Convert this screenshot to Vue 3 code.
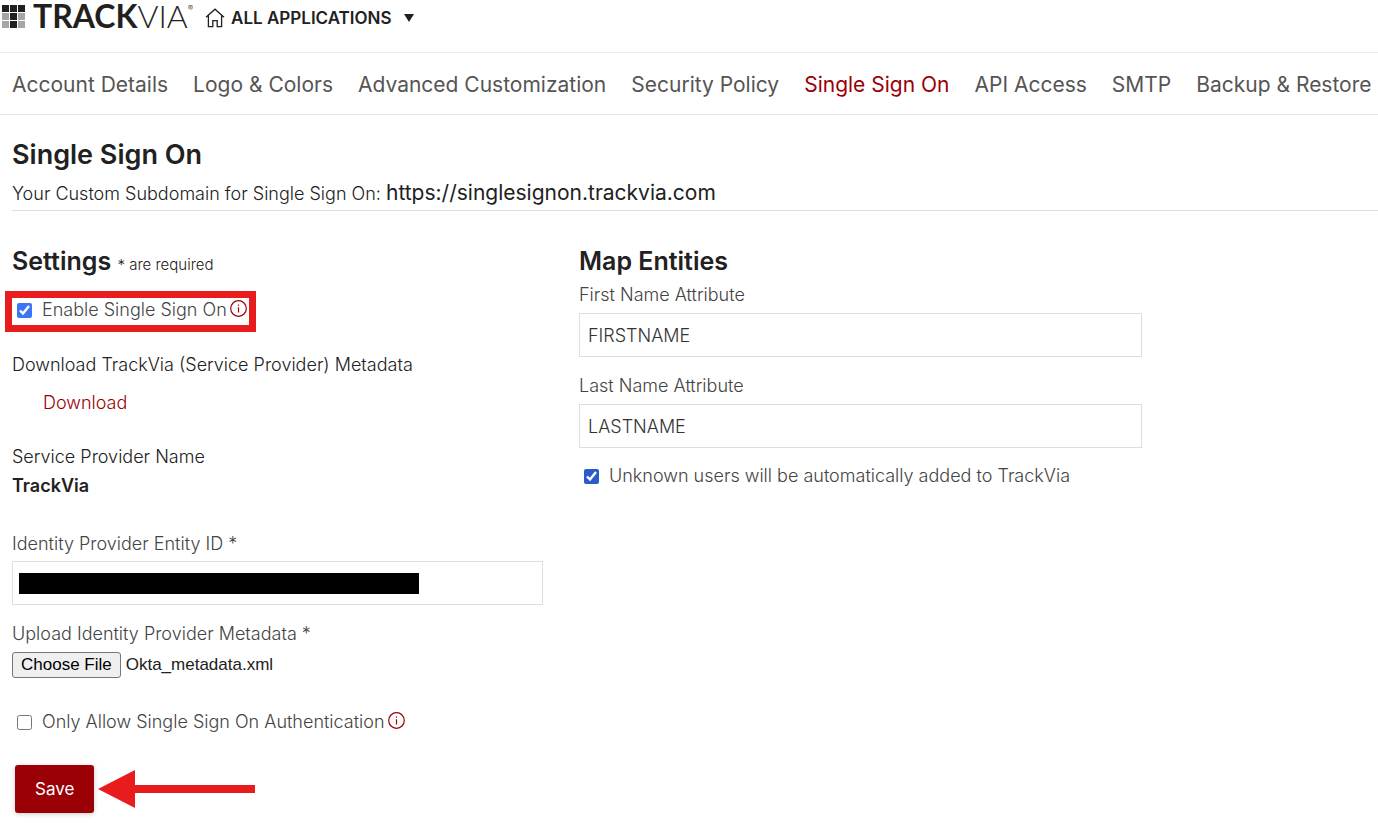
<template>
  <div class="page">
    <header class="topbar">
      <a class="brand" href="#" aria-label="TrackVia home">
        <svg class="brand-mark" viewBox="0 0 23 23" aria-hidden="true">
          <rect
            v-for="cell in markCells"
            :key="cell.id"
            :x="cell.x"
            :y="cell.y"
            width="7"
            height="7"
            :fill="cell.dark ? '#221f20' : '#a7a5a6'"
          />
        </svg>
        <span class="brand-name"><b>TRACK</b><span class="brand-thin">VIA</span></span>
        <sup class="brand-reg">®</sup>
      </a>
      <button class="apps" type="button">
        <svg class="apps-home" viewBox="0 0 20 20" aria-hidden="true">
          <path d="M1 9.2 10 1.2l9 8M3.4 7.4v11.2h4.4v-6h4.4v6h4.4V7.4" />
        </svg>
        <span>ALL APPLICATIONS</span>
        <svg class="apps-caret" viewBox="0 0 10 8" aria-hidden="true"><path d="M0 0h10L5 8z" /></svg>
      </button>
    </header>

    <nav class="tabs">
      <a v-for="tab in tabs" :key="tab" href="#" :class="{ active: tab === activeTab }">{{ tab }}</a>
    </nav>

    <main class="content">
      <section class="intro">
        <h1>Single Sign On</h1>
        <p>Your Custom Subdomain for Single Sign On: <span class="domain">https://singlesignon.trackvia.com</span></p>
      </section>

      <form class="columns" @submit.prevent>
        <section class="column">
          <h2>Settings <small>* are required</small></h2>
          <div class="check-row highlighted">
            <input id="enable-sso" v-model="enabled" type="checkbox" />
            <label for="enable-sso">Enable Single Sign On</label>
            <svg class="info" viewBox="0 0 17 17" aria-hidden="true">
              <circle cx="8.5" cy="8.5" r="7.8" />
              <path d="M8.5 7.2v5.3M8.5 4.4v1.4" />
            </svg>
          </div>

          <p class="metadata">Download TrackVia (Service Provider) Metadata</p>
          <a class="download" href="#">Download</a>

          <p class="provider">Service Provider Name</p>
          <p class="provider-name">TrackVia</p>

          <label class="entity-label" for="entity-id">Identity Provider Entity ID *</label>
          <div class="redacted">
            <input id="entity-id" class="text-input" type="text" />
          </div>

          <label class="upload-label" for="idp-file">Upload Identity Provider Metadata *</label>
          <input id="idp-file" ref="fileInput" class="file-input" type="file" />

          <div class="check-row only-row">
            <input id="only-sso" v-model="onlySso" type="checkbox" />
            <label for="only-sso">Only Allow Single Sign On Authentication</label>
            <svg class="info" viewBox="0 0 17 17" aria-hidden="true">
              <circle cx="8.5" cy="8.5" r="7.8" />
              <path d="M8.5 7.2v5.3M8.5 4.4v1.4" />
            </svg>
          </div>

          <div class="actions">
            <button class="save" type="submit">Save</button>
            <svg class="arrow" viewBox="0 0 157 38" aria-hidden="true">
              <path d="M0 19 37 0v15h120v8H37v15z" />
            </svg>
          </div>
        </section>

        <section class="column">
          <h2>Map Entities</h2>
          <label class="first-label" for="first-name">First Name Attribute</label>
          <input id="first-name" v-model="firstName" class="text-input" type="text" />
          <label class="last-label" for="last-name">Last Name Attribute</label>
          <input id="last-name" v-model="lastName" class="text-input" type="text" />
          <div class="check-row unknown-row">
            <input id="unknown-users" v-model="addUnknown" type="checkbox" />
            <label for="unknown-users">Unknown users will be automatically added to TrackVia</label>
          </div>
        </section>
      </form>
    </main>
  </div>
</template>

<script setup>
import { onMounted, ref } from 'vue'

const tabs = [
  'Account Details',
  'Logo & Colors',
  'Advanced Customization',
  'Security Policy',
  'Single Sign On',
  'API Access',
  'SMTP',
  'Backup & Restore'
]
const activeTab = ref('Single Sign On')

// the dark cells of the mark form a "T"
const markCells = Array.from({ length: 9 }, (_, i) => ({
  id: i,
  x: (i % 3) * 8,
  y: Math.floor(i / 3) * 8,
  dark: i < 3 || i % 3 === 1
}))

const enabled = ref(true)
const onlySso = ref(false)
const addUnknown = ref(true)
const firstName = ref('FIRSTNAME')
const lastName = ref('LASTNAME')

const fileInput = ref(null)

onMounted(() => {
  // file inputs have no settable value, so the stored file goes in through a DataTransfer
  const transfer = new DataTransfer()
  transfer.items.add(new File([''], 'Okta_metadata.xml', { type: 'text/xml' }))
  fileInput.value.files = transfer.files
})
</script>

<style>
body {
  margin: 0;
  background: #fff;
}
</style>

<style scoped>
.page {
  font-family: Inter, "Liberation Sans", sans-serif;
  font-size: 18px;
  font-weight: 300;
  line-height: 24px;
  color: #212121;
}

h1,
h2,
p {
  margin: 0;
}

h1,
h2 {
  font-size: 27px;
  font-weight: 600;
  line-height: 32px;
}

h2 {
  font-size: 25px;
}

a {
  color: #9b0006;
  text-decoration: none;
}

.topbar {
  display: flex;
  align-items: flex-start;
  gap: 12px;
  height: 52px;
  border-bottom: 1px solid #ececec;
}

.brand {
  display: flex;
  align-items: center;
  height: 33px;
  padding-left: 2px;
  color: #221f20;
}

.brand-mark {
  width: 23px;
  height: 23px;
  margin-right: 8px;
}

.brand-name {
  padding-bottom: 2px;
  font-family: Lato, sans-serif;
  font-size: 32px;
  line-height: 32px;
}

.brand-name b {
  font-weight: 700;
}

.brand-thin {
  font-weight: 300;
}

.brand-reg {
  align-self: flex-start;
  font-size: 8px;
  line-height: 16px;
}

.apps {
  display: flex;
  align-items: center;
  height: 35px;
  padding: 0;
  border: 0;
  background: none;
  color: #212121;
  font: inherit;
  font-size: 17px;
  font-weight: 600;
  cursor: pointer;
}

.apps-home {
  width: 20px;
  height: 20px;
  margin-right: 6px;
  fill: none;
  stroke: #212121;
  stroke-width: 1.3;
}

.apps-caret {
  width: 10px;
  height: 8px;
  margin-left: 12px;
  fill: #212121;
}

.tabs {
  display: flex;
  gap: 25px;
  padding: 18px 12px 15px;
  border-bottom: 1px solid #e4e4e4;
  font-size: 21px;
  font-weight: 400;
  line-height: 28px;
  white-space: nowrap;
}

.tabs a {
  color: #555;
}

.tabs .active {
  color: #9b0006;
}

.content {
  padding-left: 12px;
}

.intro {
  padding: 24px 0 2px;
  border-bottom: 1px solid #dedede;
}

.intro p {
  line-height: 28px;
  padding-top: 8px;
}

.domain {
  font-size: 21px;
  font-weight: 400;
}

.columns {
  display: grid;
  grid-template-columns: 531fr 563fr;
  gap: 36px;
  max-width: 1130px;
  padding-top: 34px;
}

.column {
  display: flex;
  flex-direction: column;
  align-items: flex-start;
}

small {
  font-size: 15px;
  font-weight: 300;
}

label {
  color: #444;
}

.check-row {
  display: flex;
  align-items: center;
  padding-left: 5px;
}

.check-row input {
  width: 15px;
  height: 15px;
  margin: 0 10px 0 0;
  accent-color: #3b76f6;
}

.highlighted {
  position: relative;
  margin-top: 17px;
}

/* red frame drawn over the row */
.highlighted::after {
  content: "";
  position: absolute;
  inset: -7px -9px -10px -7px;
  border: 7px solid #e81c1c;
  pointer-events: none;
}

.info {
  width: 17px;
  height: 17px;
  margin: 0 0 3px 3px;
  fill: none;
  stroke: #9b0006;
  stroke-width: 1.2;
}

.metadata {
  margin-top: 31px;
}

.download {
  margin: 14px 0 0 31px;
}

.provider {
  margin-top: 30px;
}

.provider-name {
  margin-top: 5px;
  font-weight: 600;
}

.entity-label {
  margin: 34px 0 5px;
}

.text-input {
  display: block;
  box-sizing: border-box;
  width: 100%;
  height: 44px;
  padding: 0 8px;
  border: 1px solid #dedede;
  background: #fff;
  color: #333;
  font: inherit;
}

.redacted {
  position: relative;
  width: 100%;
}

.redacted::after {
  content: "";
  position: absolute;
  top: 12px;
  left: 7px;
  width: 400px;
  height: 21px;
  background: #000;
  pointer-events: none;
}

.upload-label {
  margin: 17px 0 6px;
}

.file-input {
  height: 26px;
  color: #212121;
  font-family: "Liberation Sans", Arial, sans-serif;
  font-size: 17px;
  font-weight: 400;
  line-height: 20px;
}

.file-input::file-selector-button {
  box-sizing: border-box;
  height: 26px;
  margin: 0 5px 0 0;
  padding: 0 8px;
  border: 1px solid #767676;
  border-radius: 3px;
  background: #efefef;
  color: #000;
  font: inherit;
}

.only-row {
  margin-top: 32px;
}

.actions {
  display: flex;
  align-items: center;
  gap: 4px;
  margin: 31px 0 10px 3px;
}

.save {
  height: 48px;
  padding: 0 20px;
  border: 0;
  border-radius: 3px;
  background: #9b0006;
  box-shadow: 0 1px 5px rgba(0, 0, 0, 0.2);
  color: #fff;
  font: inherit;
  font-size: 17px;
  font-weight: 400;
  cursor: pointer;
}

.arrow {
  width: 157px;
  height: 38px;
  fill: #e81c1c;
}

.first-label {
  margin: 6px 0;
}

.last-label {
  margin: 17px 0 6px;
}

.unknown-row {
  margin-top: 16px;
}

.unknown-row input {
  accent-color: #2a5bc9;
}
</style>
